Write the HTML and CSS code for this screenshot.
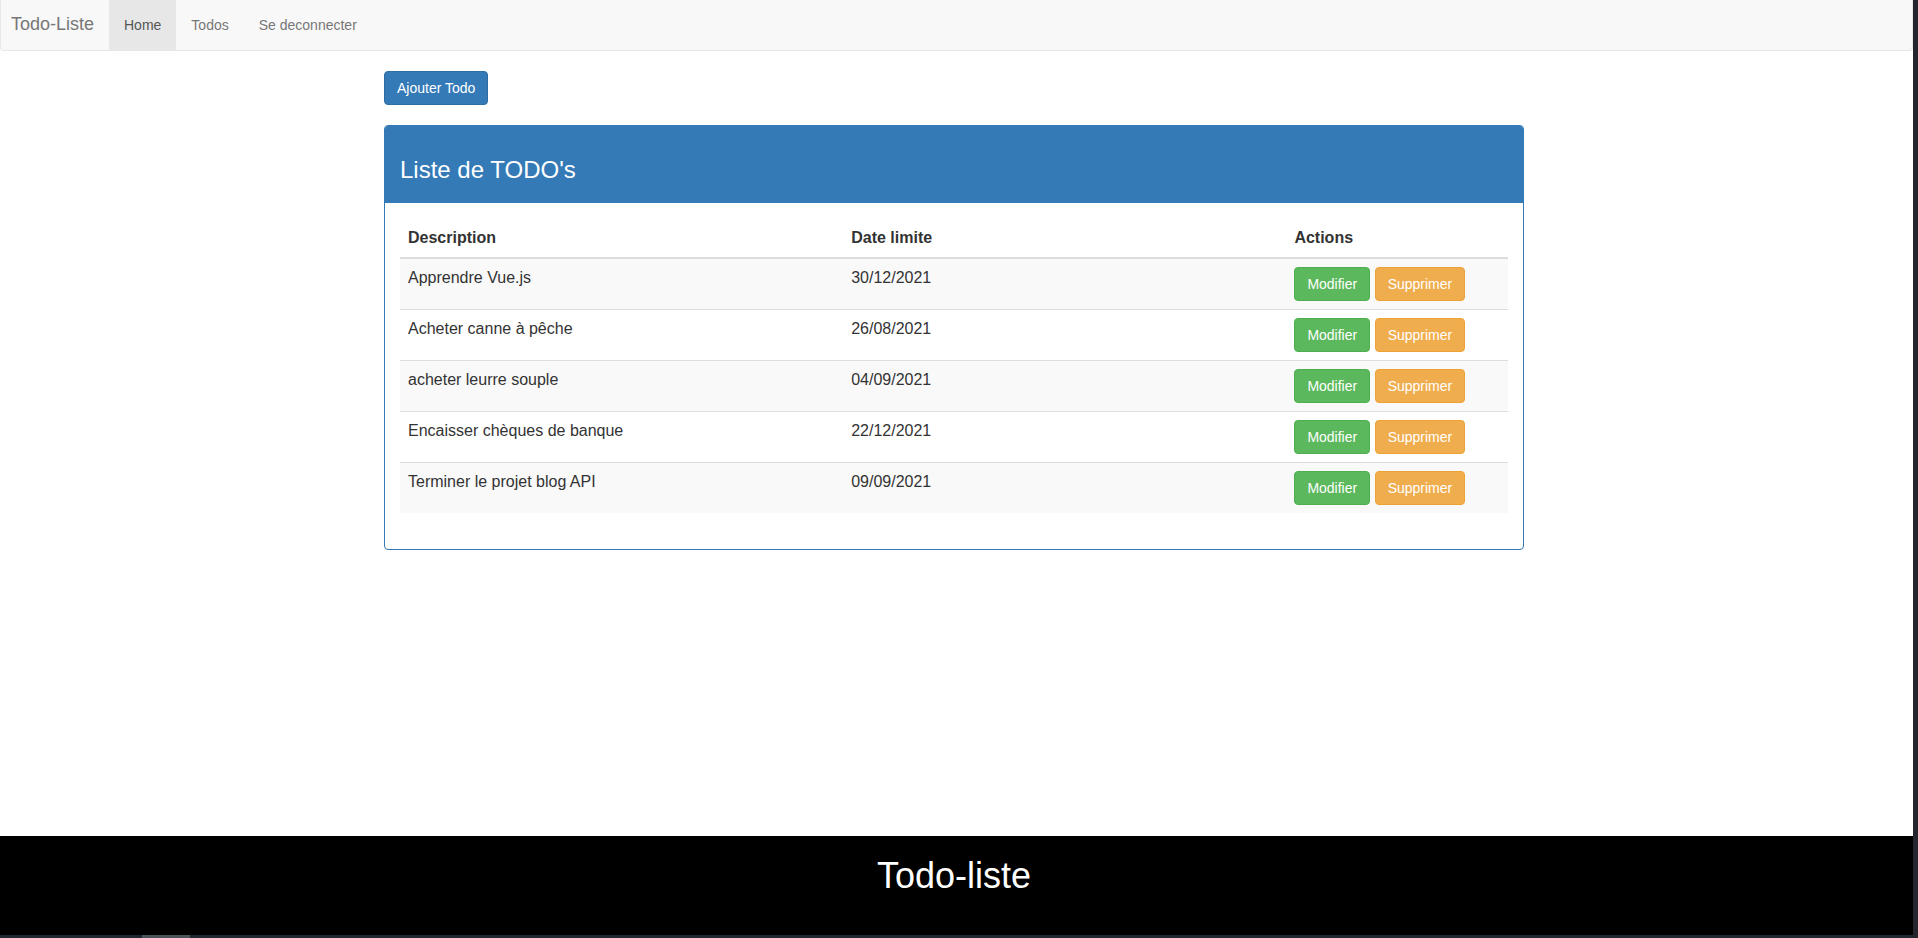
FILE: index.html
```html
<!DOCTYPE html>
<html lang="fr">
<head>
<meta charset="utf-8">
<title>Todo-Liste</title>
<link rel="stylesheet" href="styles.css">
</head>
<body>
<div class="screen">
  <div class="page">
    <nav class="navbar">
      <a class="brand" href="#">Todo-Liste</a>
      <ul class="nav">
        <li class="active"><a href="#">Home</a></li>
        <li><a href="#">Todos</a></li>
        <li><a href="#">Se deconnecter</a></li>
      </ul>
    </nav>
    <main class="main">
      <div class="container">
        <button class="btn btn-primary add-btn">Ajouter Todo</button>
        <div class="panel">
          <div class="panel-heading">
            <h3 class="panel-title">Liste de TODO's</h3>
          </div>
          <div class="panel-body">
            <table class="table">
              <thead>
                <tr>
                  <th class="col-desc">Description</th>
                  <th class="col-date">Date limite</th>
                  <th class="col-act">Actions</th>
                </tr>
              </thead>
              <tbody>
                <tr>
                  <td>Apprendre Vue.js</td>
                  <td>30/12/2021</td>
                  <td><button class="btn btn-success">Modifier</button> <button class="btn btn-warning">Supprimer</button></td>
                </tr>
                <tr>
                  <td>Acheter canne à pêche</td>
                  <td>26/08/2021</td>
                  <td><button class="btn btn-success">Modifier</button> <button class="btn btn-warning">Supprimer</button></td>
                </tr>
                <tr>
                  <td>acheter leurre souple</td>
                  <td>04/09/2021</td>
                  <td><button class="btn btn-success">Modifier</button> <button class="btn btn-warning">Supprimer</button></td>
                </tr>
                <tr>
                  <td>Encaisser chèques de banque</td>
                  <td>22/12/2021</td>
                  <td><button class="btn btn-success">Modifier</button> <button class="btn btn-warning">Supprimer</button></td>
                </tr>
                <tr>
                  <td>Terminer le projet blog API</td>
                  <td>09/09/2021</td>
                  <td><button class="btn btn-success">Modifier</button> <button class="btn btn-warning">Supprimer</button></td>
                </tr>
              </tbody>
            </table>
          </div>
        </div>
      </div>
    </main>
    <footer class="footer">
      <h1 class="footer-title">Todo-liste</h1>
    </footer>
    <div class="hscroll"><div class="hthumb"></div></div>
  </div>
  <div class="vscroll"></div>
</div>
</body>
</html>
```

FILE: styles.css
```css
* { box-sizing: border-box; }

html, body {
  margin: 0;
  padding: 0;
  height: 938px;
  overflow: hidden;
}

body {
  font-family: "Liberation Sans", Arial, Helvetica, sans-serif;
  font-size: 14px;
  line-height: 1.42857143;
  color: #333;
  background: #fff;
}

.screen {
  display: flex;
  height: 938px;
}

.page {
  width: 1913px;
  display: flex;
  flex-direction: column;
  height: 938px;
}

.vscroll {
  width: 5px;
  background: #23272d;
}

/* Navbar */
.navbar {
  display: flex;
  align-items: stretch;
  height: 51px;
  background: #f8f8f8;
  border: 1px solid #e7e7e7;
  border-top: 0;
  border-radius: 0 0 4px 4px;
}

.brand {
  display: block;
  width: 108px;
  padding: 14px 0 0 10px;
  font-size: 18px;
  line-height: 20px;
  color: #777;
  text-decoration: none;
}

.nav {
  display: flex;
  list-style: none;
  margin: 0;
  padding: 0;
}

.nav li a {
  display: block;
  padding: 15px 15px;
  line-height: 20px;
  color: #777;
  text-decoration: none;
}

.nav li.active a {
  color: #555;
  background: #e7e7e7;
}

/* Main */
.main {
  flex: 1;
  padding-right: 5px;
}

.container {
  width: 1170px;
  margin: 0 auto;
  padding: 20px 15px 0;
}

.btn {
  display: inline-block;
  padding: 6px 12px;
  font-family: inherit;
  font-size: 14px;
  line-height: 20px;
  font-weight: 400;
  border: 1px solid transparent;
  border-radius: 4px;
  color: #fff;
  vertical-align: middle;
  cursor: pointer;
}

.btn-primary { background: #337ab7; border-color: #2e6da4; }
.btn-success { background: #5cb85c; border-color: #4cae4c; }
.btn-warning { background: #f0ad4e; border-color: #eea236; }

.add-btn {
  margin-bottom: 20px;
  display: block;
}

/* Panel */
.panel {
  border: 1px solid #337ab7;
  border-radius: 4px;
  background: #fff;
}

.panel-heading {
  background: #337ab7;
  color: #fff;
  padding: 10px 15px;
  border-radius: 3px 3px 0 0;
}

.panel-title {
  margin: 20px 0 10px;
  font-size: 24px;
  font-weight: 400;
  line-height: 27px;
}

.panel-body {
  padding: 15px;
}

/* Table */
.table {
  width: 100%;
  border-collapse: collapse;
  border-spacing: 0;
  margin-bottom: 21px;
  font-size: 16px;
}

.table th {
  text-align: left;
  font-weight: 700;
  padding: 8px;
  line-height: 23px;
  border-bottom: 2px solid #ddd;
}

.col-desc { width: 40%; }
.col-date { width: 40%; }
.col-act { width: 20%; }

.table td {
  padding: 8px;
  line-height: 1.42857143;
  vertical-align: top;
  border-top: 1px solid #ddd;
}

.table tbody tr:nth-child(odd) {
  background: #f9f9f9;
}

/* Footer */
.footer {
  height: 99px;
  background: #000;
  color: #fff;
  text-align: center;
  padding-top: 20px;
  padding-right: 5px;
}

.footer-title {
  margin: 0;
  font-size: 36px;
  font-weight: 400;
  line-height: 40px;
}

.hscroll {
  height: 3px;
  background: #1f282e;
  display: flex;
}

.hthumb {
  margin-left: 142px;
  width: 48px;
  background: #4a5358;
}
```
